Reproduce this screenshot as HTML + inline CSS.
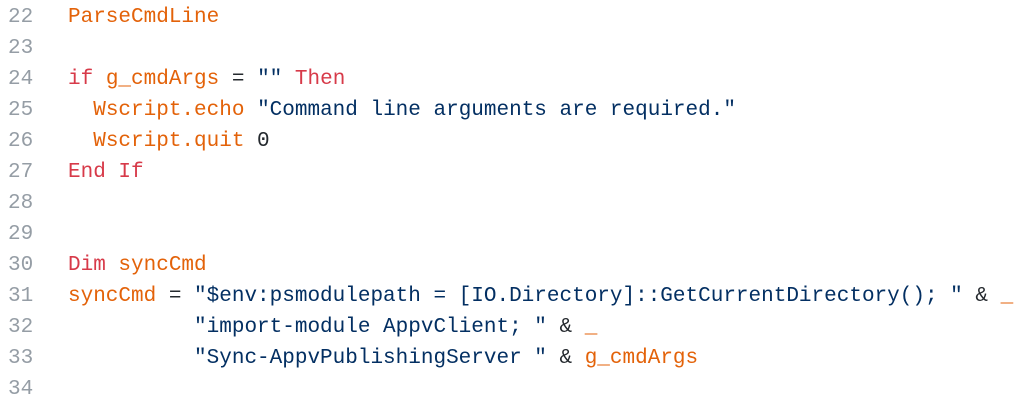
<html><head><style>
body{margin:0;background:#fff;width:1036px;height:403px;overflow:hidden}
pre{margin:0;padding:2px 0 0 0;font-family:"Liberation Mono",monospace;font-size:21px;line-height:31px;color:#24292e}
.n{color:#959da5;display:inline-block;width:68px;padding-left:8px;box-sizing:border-box}
.k{color:#d73a49}.o{color:#e36209}.s{color:#032f62}
</style></head><body><pre>
<span class="n">22</span><span class="o">ParseCmdLine</span>
<span class="n">23</span>
<span class="n">24</span><span class="k">if</span> <span class="o">g_cmdArgs</span> = <span class="s">""</span> <span class="k">Then</span>
<span class="n">25</span>  <span class="o">Wscript.echo</span> <span class="s">"Command line arguments are required."</span>
<span class="n">26</span>  <span class="o">Wscript.quit</span> 0
<span class="n">27</span><span class="k">End If</span>
<span class="n">28</span>
<span class="n">29</span>
<span class="n">30</span><span class="k">Dim</span> <span class="o">syncCmd</span>
<span class="n">31</span><span class="o">syncCmd</span> = <span class="s">"$env:psmodulepath = [IO.Directory]::GetCurrentDirectory(); "</span> &amp; <span class="o">_</span>
<span class="n">32</span>          <span class="s">"import-module AppvClient; "</span> &amp; <span class="o">_</span>
<span class="n">33</span>          <span class="s">"Sync-AppvPublishingServer "</span> &amp; <span class="o">g_cmdArgs</span>
<span class="n">34</span>
</pre></body></html>
